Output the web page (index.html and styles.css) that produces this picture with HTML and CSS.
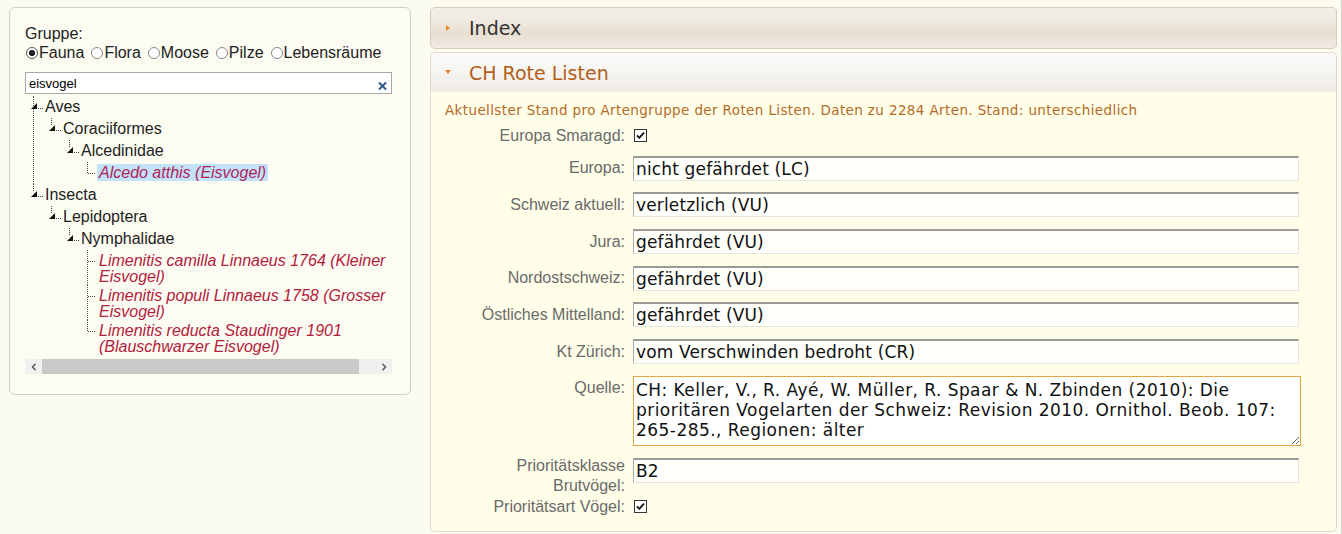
FILE: index.html
```html
<!DOCTYPE html>
<html lang="de">
<head>
<meta charset="utf-8">
<title>Arteigenschaften</title>
<link rel="stylesheet" href="styles.css">
</head>
<body>
<div class="page">
  <aside class="filter">
    <div class="group-label">Gruppe:</div>
    <div class="radios">
      <label class="radio checked"><span class="dot"></span>Fauna</label>
      <label class="radio"><span class="dot"></span>Flora</label>
      <label class="radio"><span class="dot"></span>Moose</label>
      <label class="radio"><span class="dot"></span>Pilze</label>
      <label class="radio"><span class="dot"></span>Lebensräume</label>
    </div>
    <div class="search">
      <input class="search-input" type="text" value="eisvogel" readonly>
      <span class="clear"><svg width="9" height="8" viewBox="0 0 9 8"><path d="M1 0.5 L8 7.5 M8 0.5 L1 7.5" stroke="#365d91" stroke-width="2.1" fill="none"/></svg></span>
    </div>
    <div class="tree-wrap">
      <ul class="tree">
        <li>
          <div class="node"><svg class="ico" viewBox="0 0 11 16"><polygon points="-3,10 3,10 3,4" fill="#111"/><line x1="4" y1="9.5" x2="10" y2="9.5" class="dots"/></svg><span class="txt">Aves</span></div>
          <ul>
            <li class="last">
              <div class="node"><svg class="ico" viewBox="0 0 11 16"><line x1="-0.5" y1="-3" x2="-0.5" y2="4" class="dots"/><polygon points="-3,10 3,10 3,4" fill="#111"/><line x1="4" y1="9.5" x2="10" y2="9.5" class="dots"/></svg><span class="txt">Coraciiformes</span></div>
              <ul>
                <li class="last">
                  <div class="node"><svg class="ico" viewBox="0 0 11 16"><line x1="-0.5" y1="-3" x2="-0.5" y2="4" class="dots"/><polygon points="-3,10 3,10 3,4" fill="#111"/><line x1="4" y1="9.5" x2="10" y2="9.5" class="dots"/></svg><span class="txt">Alcedinidae</span></div>
                  <ul>
                    <li class="last">
                      <div class="node"><svg class="ico" viewBox="0 0 11 16"><line x1="-0.5" y1="-3" x2="-0.5" y2="8.5" class="dots"/><line x1="0" y1="8.5" x2="7" y2="8.5" class="dots"/></svg><span class="txt species"><span class="hl">Alcedo atthis (Eisvogel)</span></span></div>
                    </li>
                  </ul>
                </li>
              </ul>
            </li>
          </ul>
        </li>
        <li class="last">
          <div class="node"><svg class="ico" viewBox="0 0 11 16"><line x1="-0.5" y1="-3" x2="-0.5" y2="4" class="dots"/><polygon points="-3,10 3,10 3,4" fill="#111"/><line x1="4" y1="9.5" x2="10" y2="9.5" class="dots"/></svg><span class="txt">Insecta</span></div>
          <ul>
            <li class="last">
              <div class="node"><svg class="ico" viewBox="0 0 11 16"><line x1="-0.5" y1="-3" x2="-0.5" y2="4" class="dots"/><polygon points="-3,10 3,10 3,4" fill="#111"/><line x1="4" y1="9.5" x2="10" y2="9.5" class="dots"/></svg><span class="txt">Lepidoptera</span></div>
              <ul>
                <li class="last">
                  <div class="node"><svg class="ico" viewBox="0 0 11 16"><line x1="-0.5" y1="-3" x2="-0.5" y2="4" class="dots"/><polygon points="-3,10 3,10 3,4" fill="#111"/><line x1="4" y1="9.5" x2="10" y2="9.5" class="dots"/></svg><span class="txt">Nymphalidae</span></div>
                  <ul>
                    <li>
                      <div class="node"><svg class="ico" viewBox="0 0 11 16"><line x1="0" y1="8.5" x2="7" y2="8.5" class="dots"/></svg><span class="txt species">Limenitis camilla Linnaeus 1764 (Kleiner Eisvogel)</span></div>
                    </li>
                    <li>
                      <div class="node"><svg class="ico" viewBox="0 0 11 16"><line x1="0" y1="8.5" x2="7" y2="8.5" class="dots"/></svg><span class="txt species">Limenitis populi Linnaeus 1758 (Grosser Eisvogel)</span></div>
                    </li>
                    <li class="last">
                      <div class="node"><svg class="ico" viewBox="0 0 11 16"><line x1="-0.5" y1="-3" x2="-0.5" y2="8.5" class="dots"/><line x1="0" y1="8.5" x2="7" y2="8.5" class="dots"/></svg><span class="txt species">Limenitis reducta Staudinger 1901 (Blauschwarzer Eisvogel)</span></div>
                    </li>
                  </ul>
                </li>
              </ul>
            </li>
          </ul>
        </li>
      </ul>
    </div>
    <div class="hscroll">
      <span class="arr"><svg width="6" height="8" viewBox="0 0 6 8"><path d="M4.5 0.8 L1.5 4 L4.5 7.2" stroke="#555" stroke-width="1.4" fill="none"/></svg></span>
      <span class="thumb"></span>
      <span class="track"></span>
      <span class="arr"><svg width="6" height="8" viewBox="0 0 6 8"><path d="M1.5 0.8 L4.5 4 L1.5 7.2" stroke="#555" stroke-width="1.4" fill="none"/></svg></span>
    </div>
  </aside>

  <main class="accordion">
    <div class="acc-head closed"><span class="tri-right"></span>Index</div>
    <div class="acc-head open"><span class="tri-down"></span>CH Rote Listen</div>
    <div class="acc-body">
      <p class="desc">Aktuellster Stand pro Artengruppe der Roten Listen. Daten zu 2284 Arten. Stand: unterschiedlich</p>
      <div class="form">
        <label class="lbl cb">Europa Smaragd:</label>
        <div class="ctl cb"><svg class="check" width="13" height="13" viewBox="0 0 13 13"><rect x="0.5" y="0.5" width="12" height="12" fill="#fff" stroke="#333"/><path d="M3 6.4 L5.3 8.9 L10 3.6" stroke="#111" stroke-width="1.8" fill="none"/></svg></div>

        <label class="lbl">Europa:</label>
        <input class="field" type="text" value="nicht gefährdet (LC)" readonly>

        <label class="lbl">Schweiz aktuell:</label>
        <input class="field" type="text" value="verletzlich (VU)" readonly>

        <label class="lbl">Jura:</label>
        <input class="field" type="text" value="gefährdet (VU)" readonly>

        <label class="lbl">Nordostschweiz:</label>
        <input class="field" type="text" value="gefährdet (VU)" readonly>

        <label class="lbl">Östliches Mittelland:</label>
        <input class="field" type="text" value="gefährdet (VU)" readonly>

        <label class="lbl">Kt Zürich:</label>
        <input class="field" type="text" value="vom Verschwinden bedroht (CR)" readonly>

        <label class="lbl">Quelle:</label>
        <textarea class="area" readonly>CH: Keller, V., R. Ayé, W. Müller, R. Spaar &amp; N. Zbinden (2010): Die prioritären Vogelarten der Schweiz: Revision 2010. Ornithol. Beob. 107: 265-285., Regionen: älter</textarea>

        <label class="lbl two">Prioritätsklasse Brutvögel:</label>
        <input class="field" type="text" value="B2" readonly>

        <label class="lbl cb">Prioritätsart Vögel:</label>
        <div class="ctl cb"><svg class="check" width="13" height="13" viewBox="0 0 13 13"><rect x="0.5" y="0.5" width="12" height="12" fill="#fff" stroke="#333"/><path d="M3 6.4 L5.3 8.9 L10 3.6" stroke="#111" stroke-width="1.8" fill="none"/></svg></div>
      </div>
    </div>
  </main>
</div>
</body>
</html>
```

FILE: styles.css
```css
html, body {
  margin: 0;
  padding: 0;
}

body {
  background: #fbfbf0;
  font-family: "Liberation Sans", Arial, sans-serif;
  color: #222;
  min-height: 100vh;
  box-shadow: inset -1px 0 0 #d2d2ca;
}

.page {
  display: flex;
  align-items: flex-start;
  gap: 19px;
  padding: 7px 0 0 9px;
}

/* ---------- left filter panel ---------- */
.filter {
  width: 402px;
  box-sizing: border-box;
  border: 1px solid #cfcfc6;
  border-radius: 6px;
  padding: 16px 18px 20px 15px;
  background: #fcfcf2;
}

.group-label {
  font-size: 16px;
  line-height: 19px;
  color: #222;
}

.radios {
  display: flex;
  font-size: 16px;
  line-height: 19px;
  color: #222;
}

.radio {
  display: inline-flex;
  align-items: center;
  margin-right: 7px;
}

.dot {
  width: 12px;
  height: 12px;
  box-sizing: border-box;
  border: 1px solid #8a8a8a;
  border-radius: 50%;
  background: #fff;
  margin: 1px 1px 0 0;
}

.radio:first-child .dot {
  margin-left: 1px;
}

.radio.checked .dot {
  border-color: #555;
  background: radial-gradient(circle, #222 0 2.8px, #fff 3.4px);
}

.search {
  position: relative;
  margin-top: 10px;
}

.search-input {
  display: block;
  width: 100%;
  height: 22px;
  box-sizing: border-box;
  border: 1px solid #a8a8a8;
  background: #fff;
  padding: 0 22px 0 3px;
  font: 13px "Liberation Sans", Arial, sans-serif;
  color: #000;
  outline: none;
}

.clear {
  position: absolute;
  right: 5px;
  top: 10px;
  line-height: 0;
}

.tree-wrap {
  margin-top: 2px;
  overflow: hidden;
}

.tree, .tree ul {
  list-style: none;
  margin: 0;
  padding: 0;
}

.tree {
  padding-left: 8px;
}

.tree ul {
  padding-left: 17px;
}

.tree li {
  border-left: 1px dotted #555;
}

.tree li.last {
  border-left: none;
  padding-left: 1px;
}

.node {
  display: flex;
  align-items: flex-start;
  min-height: 22px;
  box-sizing: border-box;
  padding-top: 3px;
  font-size: 16px;
  line-height: 16px;
}

.ico {
  flex: none;
  width: 11px;
  height: 16px;
  overflow: visible;
}

.dots {
  stroke: #444;
  stroke-width: 1;
  stroke-dasharray: 1 1;
}

.txt {
  min-width: 0;
  color: #1e1e1e;
}

.txt.species {
  color: #b3203c;
  font-style: italic;
}

.hl {
  background: #c2e2f8;
  padding: 0 2px;
  margin-left: -2px;
  color: #b0225a;
}

.hscroll {
  display: flex;
  height: 15px;
  margin-top: 4px;
  background: #f0f0f0;
}

.arr {
  width: 17px;
  flex: none;
  display: flex;
  align-items: center;
  justify-content: center;
}

.thumb {
  width: 317px;
  flex: none;
  background: #c9c9c9;
}

.track {
  flex: 1;
}

/* ---------- accordion ---------- */
.accordion {
  width: 907px;
  box-sizing: border-box;
}

.acc-head {
  display: flex;
  align-items: center;
  box-sizing: border-box;
  font-family: "DejaVu Sans", Verdana, sans-serif;
  font-size: 19px;
}

.acc-head.closed {
  height: 42px;
  border: 1px solid #d6cdbf;
  border-radius: 5px;
  color: #333;
  background: linear-gradient(#f3efe8 0%, #efe9e0 35%, #e7dfd1 62%, #ebe4d9 80%, #f0ebe3 100%);
}

.acc-head.open {
  height: 40px;
  margin-top: 3px;
  border: 1px solid #e0d9cd;
  border-bottom: none;
  border-radius: 5px 5px 0 0;
  color: #b25e18;
  background: linear-gradient(#fbfbfa 0%, #f7f6f3 40%, #efebe5 100%);
}

.tri-right {
  width: 0;
  height: 0;
  border-left: 4px solid #e88a2e;
  border-top: 3.5px solid transparent;
  border-bottom: 3.5px solid transparent;
  margin: 0 19px 0 15px;
}

.tri-down {
  width: 0;
  height: 0;
  border-top: 4px solid #e8802a;
  border-left: 3.5px solid transparent;
  border-right: 3.5px solid transparent;
  margin: 0 18px 2px 14px;
}

.acc-body {
  border: 1px solid #e2dbce;
  border-top: none;
  border-radius: 0 0 5px 5px;
  background: #fffee9;
  padding: 9px 14px 16px 14px;
}

.desc {
  margin: 0;
  font-family: "DejaVu Sans", Verdana, sans-serif;
  font-size: 13.5px;
  letter-spacing: 0.38px;
  line-height: 18px;
  color: #b46a26;
}

.form {
  display: grid;
  grid-template-columns: 180px 668px;
  column-gap: 8px;
  row-gap: 11.7px;
  align-items: start;
  margin-top: 8px;
}

.lbl {
  text-align: right;
  font-size: 16px;
  line-height: 20px;
  padding-top: 2.5px;
  color: #6a6a6a;
}

.lbl.cb {
  line-height: 17px;
  padding-top: 0;
}

.lbl.two {
  padding-top: 0;
  margin-top: -1.3px;
  margin-bottom: -10px;
}

.ctl.cb {
  height: 17px;
  display: flex;
  align-items: center;
  padding-left: 1px;
}

.field {
  display: block;
  width: 666px;
  height: 25px;
  box-sizing: border-box;
  margin: 0;
  border-style: solid;
  border-width: 2px 1px 1px 1px;
  border-color: #9a9a96 #e6e6e0 #e6e6e0 #adada9;
  background: #fffffc;
  padding: 0 2px;
  font-family: "DejaVu Sans", Verdana, sans-serif;
  font-size: 17px;
  letter-spacing: 0.15px;
  color: #111;
  outline: none;
}

.area {
  display: block;
  width: 668px;
  height: 70px;
  box-sizing: border-box;
  margin: 0;
  border: 1px solid #e0a64a;
  background: #fff;
  padding: 3px 2px;
  font-family: "DejaVu Sans", Verdana, sans-serif;
  font-size: 17px;
  letter-spacing: 0.45px;
  line-height: 20px;
  color: #111;
  resize: both;
  overflow: hidden;
  outline: none;
}
```
